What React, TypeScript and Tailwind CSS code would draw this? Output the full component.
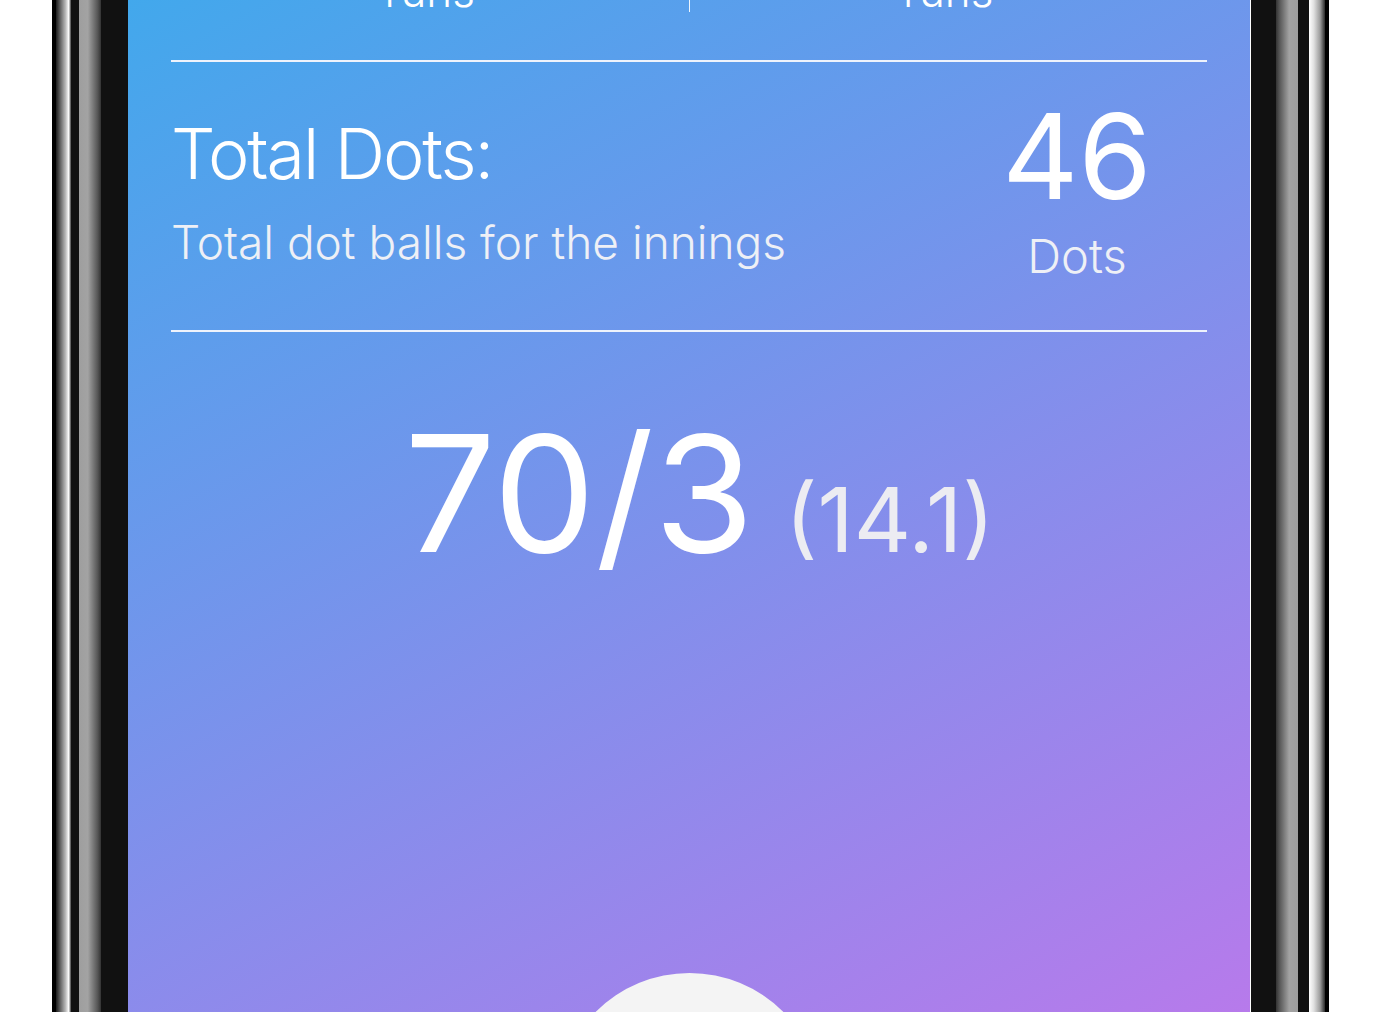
import React from 'react';

function StatLabel({ text }: { text: string }) {
  return (
    <div className="flex-1 text-center text-[44px] leading-none font-light text-white">
      {text}
    </div>
  );
}

function Divider() {
  return <div className="h-[2px] shrink-0 bg-[#eef3fc]" />;
}

export default function App() {
  return (
    <div
      className="flex h-[1012px] w-[1389px] overflow-hidden bg-white"
      style={{ fontFamily: 'Inter, "Noto Sans", sans-serif' }}
    >
      {/* left bezel */}
      <div className="w-[52px] shrink-0 bg-white" />
      <div className="w-[4px] shrink-0 bg-black" />
      <div className="w-[15px] shrink-0 bg-[linear-gradient(90deg,#1a1a1a,#666_30%,#bdbdbd_65%,#ffffff_85%,#3a3a3a)]" />
      <div className="w-[8px] shrink-0 bg-[#111]" />
      <div className="w-[22px] shrink-0 bg-[linear-gradient(90deg,#9e9e9e,#a3a3a3_40%,#555_85%,#333)]" />
      <div className="w-[27px] shrink-0 bg-[#111]" />

      {/* screen */}
      <div className="relative flex w-[1123px] shrink-0 flex-col overflow-hidden border-r border-white bg-[linear-gradient(152deg,#42a8ec,#b77aeb)] px-[43px]">
        <div className="mt-[-31px] flex h-[43px] shrink-0 items-start">
          <StatLabel text="runs" />
          <div className="w-px self-stretch bg-white/90" />
          <StatLabel text="runs" />
        </div>

        <div className="mt-[48px] shrink-0">
          <Divider />
        </div>

        <div className="flex shrink-0 items-start justify-between pt-[35px] pb-[51px]">
          <div className="mt-[22px] flex flex-col">
            <div className="text-[70px] leading-none font-light tracking-[-0.03em] text-white">
              Total Dots:
            </div>
            <div className="mt-[30px] text-[46px] leading-none font-light text-[#eef0f6]">
              Total dot balls for the innings
            </div>
          </div>
          <div className="mr-[30px] flex w-[200px] flex-col items-center">
            <div className="text-[118px] leading-none font-normal text-white">46</div>
            <div className="mt-[17px] text-[47px] leading-none font-light text-[#eef0f6]">Dots</div>
          </div>
        </div>

        <Divider />

        <div className="mt-[80px] flex shrink-0 items-baseline justify-center pl-[21px]">
          <span className="text-[162px] leading-none font-normal text-white">70/3</span>
          <span className="ml-[31px] text-[89px] leading-none font-normal text-[#ececf2]">(14.1)</span>
        </div>

        <div className="mx-auto mt-[399px] h-[265px] w-[265px] shrink-0 rounded-full bg-[#f4f4f4]" />
      </div>

      {/* right bezel */}
      <div className="w-[25px] shrink-0 bg-[#111]" />
      <div className="w-[22px] shrink-0 bg-[linear-gradient(90deg,#333,#555_15%,#a3a3a3_60%,#9e9e9e)]" />
      <div className="w-[11px] shrink-0 bg-[#111]" />
      <div className="w-[16px] shrink-0 bg-[linear-gradient(90deg,#ffffff,#e0e0e0_30%,#9a9a9a_70%,#2a2a2a)]" />
      <div className="w-[4px] shrink-0 bg-black" />
      <div className="flex-1 bg-white" />
    </div>
  );
}
